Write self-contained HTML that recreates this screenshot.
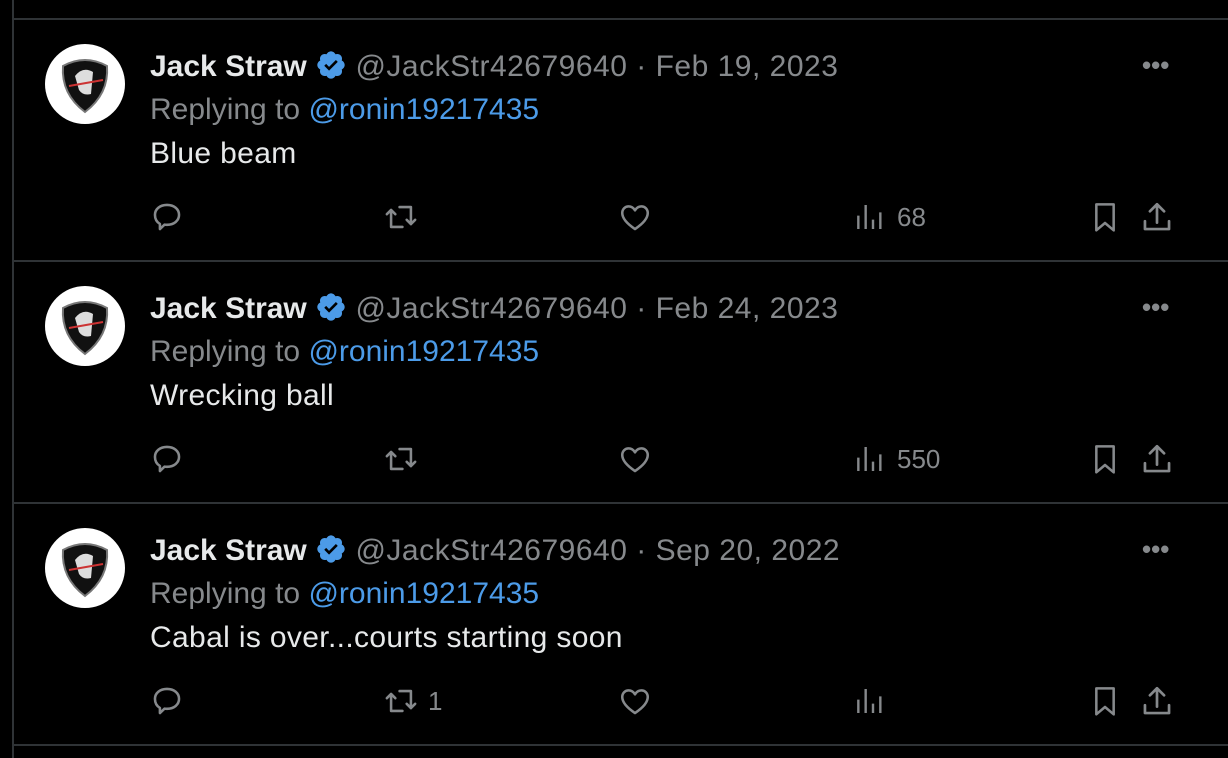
<!DOCTYPE html>
<html><head><meta charset="utf-8"><style>
body{margin:0;background:#000;width:1228px;height:758px;overflow:hidden;font-family:"Liberation Sans",Arial,sans-serif;position:relative}
.vl{position:absolute;left:12px;top:0;width:2px;height:758px;background:#2f3336}
.hl{position:absolute;left:12px;right:0;height:2px;background:#2f3336}
.t{position:absolute;left:0;width:1228px;height:242px}
.av{position:absolute;left:45px;top:44px;width:80px;height:80px;border-radius:50%;background:#fff;overflow:hidden}
.ln{position:absolute;left:150px;font-size:30px;white-space:nowrap;line-height:34px}
.n{color:#e7e9ea;font-weight:bold;font-size:30px}
.g{color:#86898c}
.h{letter-spacing:0.5px}
.b{color:#4c9be8}
.w{color:#e7e9ea;letter-spacing:0.35px}
.ic{position:absolute;top:200px}
.cnt{position:absolute;top:202px;font-size:26px;color:#86898c}
.dots{position:absolute;left:1142px;top:50px;color:#86898c;font-size:26px;font-weight:bold}
</style></head><body>
<svg width="0" height="0" style="position:absolute">
<defs>
<symbol id="av" viewBox="0 0 80 80"><path d="M18 22 Q40 10 62 22 Q64 50 40 68 Q16 50 18 22Z" fill="#111" stroke="#777" stroke-width="2"/><path d="M30 32 Q38 22 48 28 L46 50 Q38 52 34 46Z" fill="#ddd"/><path d="M24 42 L58 36" stroke="#c33" stroke-width="2"/></symbol>
<symbol id="badge" viewBox="0 0 24 24"><path fill="#4c9be8" d="M22.25 12c0-1.43-.88-2.67-2.19-3.34.46-1.39.2-2.9-.81-3.91s-2.52-1.27-3.91-.81c-.66-1.31-1.91-2.19-3.34-2.19s-2.67.88-3.33 2.19c-1.4-.46-2.91-.2-3.92.81s-1.26 2.520-.8 3.910c-1.31.67-2.2 1.91-2.2 3.34s.89 2.67 2.2 3.34c-.46 1.39-.21 2.9.8 3.91s2.52 1.26 3.91.81c.67 1.31 1.91 2.19 3.34 2.19s2.68-.88 3.34-2.19c1.39.45 2.9.2 3.91-.81s1.27-2.52.81-3.91c1.31-.67 2.19-1.91 2.19-3.34z"/><path fill="#000" d="M10.54 16.2l-3.6-3.6 1.41-1.41 2.19 2.19 5.13-5.13 1.41 1.41z"/></symbol>
<symbol id="rep" viewBox="0 0 24 24"><path fill="none" stroke="#86898c" stroke-width="1.8" stroke-linejoin="round" d="M12 3.5c5 0 8.5 3 8.5 7s-3.5 7-8.5 7c-.6 0-1.2 0-1.8-.1L7 20.5v-3.6C4.8 15.6 3.5 13.2 3.5 10.5c0-4 3.5-7 8.5-7z"/></symbol>
<symbol id="rt" viewBox="0 0 24 24"><path fill="none" stroke="#86898c" stroke-width="1.8" stroke-linecap="round" stroke-linejoin="round" d="M5 19V7M2 10l3-3 3 3M5 19h8M19 5v12M16 14l3 3 3-3M19 5h-8"/></symbol>
<symbol id="hrt" viewBox="0 0 24 24"><path fill="none" stroke="#86898c" stroke-width="1.8" stroke-linejoin="round" d="M12 20.5C6 16.5 3 13 3 9.2 3 6.4 5 4.5 7.5 4.5c1.9 0 3.5 1.1 4.5 2.8 1-1.7 2.6-2.8 4.5-2.8C19 4.5 21 6.4 21 9.2c0 3.8-3 7.3-9 11.3z"/></symbol>
<symbol id="vw" viewBox="0 0 24 24"><path stroke="#86898c" stroke-width="1.8" d="M4 21V11M9.5 21V3M15 21v-7M20.5 21V8.5"/></symbol>
<symbol id="bm" viewBox="0 0 24 24"><path fill="none" stroke="#86898c" stroke-width="1.9" stroke-linejoin="round" d="M5.5 2.5h13v19.5L12 16.5 5.5 22z"/></symbol>
<symbol id="sh" viewBox="0 0 24 24"><path fill="none" stroke="#86898c" stroke-width="1.9" stroke-linecap="round" stroke-linejoin="round" d="M12 16V3M7 8l5-5 5 5M3.5 15v5.5h17V15"/></symbol>
</defs></svg>
<div class="vl"></div>
<div class="hl" style="top:18px"></div>
<div class="hl" style="top:260px"></div>
<div class="hl" style="top:502px"></div>
<div class="hl" style="top:744px"></div>

<div class="t" style="top:0">
<div class="av"><svg width="80" height="80"><use href="#av"/></svg></div>
<div class="ln" style="top:49px"><span class="n">Jack Straw</span> <svg width="32" height="32" style="vertical-align:-5px"><use href="#badge"/></svg> <span class="g h">@JackStr42679640 · Feb 19, 2023</span></div>
<div class="ln" style="top:93px"><span class="g">Replying to </span><span class="b">@ronin19217435</span></div>
<div class="ln w" style="top:137px">Blue beam</div>
<div class="dots">•••</div>
<svg class="ic" style="left:150px" width="34" height="34"><use href="#rep"/></svg>
<svg class="ic" style="left:384px" width="34" height="34"><use href="#rt"/></svg>
<svg class="ic" style="left:618px" width="34" height="34"><use href="#hrt"/></svg>
<svg class="ic" style="left:853px" width="32" height="34"><use href="#vw"/></svg>
<div class="cnt" style="left:897px">68</div>
<svg class="ic" style="left:1089px" width="32" height="34"><use href="#bm"/></svg>
<svg class="ic" style="left:1140px" width="34" height="34"><use href="#sh"/></svg>
</div>

<div class="t" style="top:242px">
<div class="av"><svg width="80" height="80"><use href="#av"/></svg></div>
<div class="ln" style="top:49px"><span class="n">Jack Straw</span> <svg width="32" height="32" style="vertical-align:-5px"><use href="#badge"/></svg> <span class="g h">@JackStr42679640 · Feb 24, 2023</span></div>
<div class="ln" style="top:93px"><span class="g">Replying to </span><span class="b">@ronin19217435</span></div>
<div class="ln w" style="top:137px">Wrecking ball</div>
<div class="dots">•••</div>
<svg class="ic" style="left:150px" width="34" height="34"><use href="#rep"/></svg>
<svg class="ic" style="left:384px" width="34" height="34"><use href="#rt"/></svg>
<svg class="ic" style="left:618px" width="34" height="34"><use href="#hrt"/></svg>
<svg class="ic" style="left:853px" width="32" height="34"><use href="#vw"/></svg>
<div class="cnt" style="left:897px">550</div>
<svg class="ic" style="left:1089px" width="32" height="34"><use href="#bm"/></svg>
<svg class="ic" style="left:1140px" width="34" height="34"><use href="#sh"/></svg>
</div>

<div class="t" style="top:484px">
<div class="av"><svg width="80" height="80"><use href="#av"/></svg></div>
<div class="ln" style="top:49px"><span class="n">Jack Straw</span> <svg width="32" height="32" style="vertical-align:-5px"><use href="#badge"/></svg> <span class="g h">@JackStr42679640 · Sep 20, 2022</span></div>
<div class="ln" style="top:93px"><span class="g">Replying to </span><span class="b">@ronin19217435</span></div>
<div class="ln w" style="top:137px">Cabal is over...courts starting soon</div>
<div class="dots">•••</div>
<svg class="ic" style="left:150px" width="34" height="34"><use href="#rep"/></svg>
<svg class="ic" style="left:384px" width="34" height="34"><use href="#rt"/></svg>
<div class="cnt" style="left:428px">1</div>
<svg class="ic" style="left:618px" width="34" height="34"><use href="#hrt"/></svg>
<svg class="ic" style="left:853px" width="32" height="34"><use href="#vw"/></svg>
<svg class="ic" style="left:1089px" width="32" height="34"><use href="#bm"/></svg>
<svg class="ic" style="left:1140px" width="34" height="34"><use href="#sh"/></svg>
</div>
</body></html>
